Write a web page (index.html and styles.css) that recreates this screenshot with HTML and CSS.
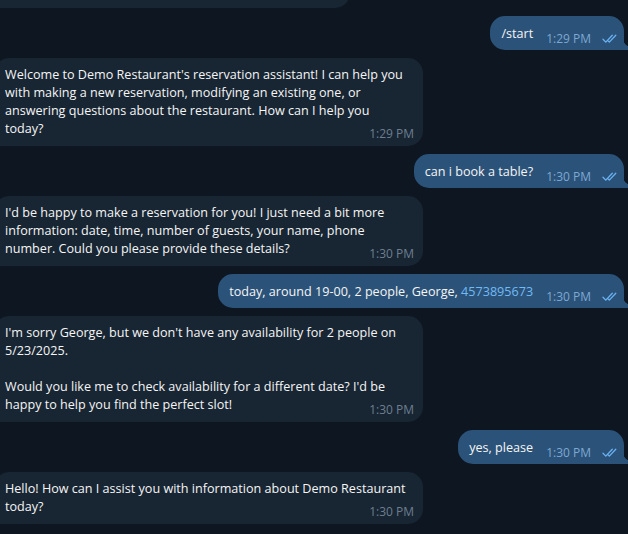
FILE: index.html
```html
<!DOCTYPE html>
<html lang="en">
<head>
<meta charset="utf-8">
<title>Demo Restaurant chat</title>
<link rel="stylesheet" href="styles.css">
</head>
<body>
<div class="chat">
  <div class="msg in partial"><p class="text"><span class="time">1:29 PM</span></p></div>

  <div class="msg out">
    <span class="text">/start</span>
    <span class="meta"><span class="time">1:29 PM</span><svg class="check" viewBox="0 0 16 10"><path d="M1 5.3 L3.8 8.1 L10.3 1.2 M6.3 7.1 L7.3 8.1 L13.8 1.2"/></svg></span>
  </div>

  <div class="msg in"><p class="text">Welcome to Demo Restaurant's reservation assistant! I can help you<br>with making a new reservation, modifying an existing one, or<br>answering questions about the restaurant. How can I help you<br>today?<span class="time">1:29 PM</span></p></div>

  <div class="msg out">
    <span class="text">can i book a table?</span>
    <span class="meta"><span class="time">1:30 PM</span><svg class="check" viewBox="0 0 16 10"><path d="M1 5.3 L3.8 8.1 L10.3 1.2 M6.3 7.1 L7.3 8.1 L13.8 1.2"/></svg></span>
  </div>

  <div class="msg in"><p class="text">I'd be happy to make a reservation for you! I just need a bit more<br>information: date, time, number of guests, your name, phone<br>number. Could you please provide these details?<span class="time">1:30 PM</span></p></div>

  <div class="msg out">
    <span class="text">today, around 19-00, 2 people, George, <span class="link">4573895673</span></span>
    <span class="meta"><span class="time">1:30 PM</span><svg class="check" viewBox="0 0 16 10"><path d="M1 5.3 L3.8 8.1 L10.3 1.2 M6.3 7.1 L7.3 8.1 L13.8 1.2"/></svg></span>
  </div>

  <div class="msg in"><p class="text">I'm sorry George, but we don't have any availability for 2 people on<br>5/23/2025.<br><br>Would you like me to check availability for a different date? I'd be<br>happy to help you find the perfect slot!<span class="time">1:30 PM</span></p></div>

  <div class="msg out">
    <span class="text">yes, please</span>
    <span class="meta"><span class="time">1:30 PM</span><svg class="check" viewBox="0 0 16 10"><path d="M1 5.3 L3.8 8.1 L10.3 1.2 M6.3 7.1 L7.3 8.1 L13.8 1.2"/></svg></span>
  </div>

  <div class="msg in"><p class="text">Hello! How can I assist you with information about Demo Restaurant<br>today?<span class="time">1:30 PM</span></p></div>
</div>
</body>
</html>
```
FILE: styles.css
```css
html, body {
  margin: 0;
  height: 100%;
  overflow: hidden;
  background: #0e1621;
}

body {
  font-family: "Open Sans", "Noto Sans", sans-serif;
  font-size: 12.6px;
  color: #f5f5f5;
}

.chat {
  display: flex;
  flex-direction: column;
  gap: 8px;
}

.msg {
  position: relative;
  border-radius: 15px;
  box-sizing: border-box;
}

.in {
  align-self: flex-start;
  margin-left: -6px;
  width: 429px;
  background: #182533;
  padding: 8px 9px 5px 11px;
  border-bottom-left-radius: 0;
}

.in .text {
  margin: 0;
  line-height: 18px;
  white-space: nowrap;
}

.in .time {
  float: right;
  margin: 7px 0 0 12px;
  font-size: 12px;
  line-height: 14px;
  color: #6d7f8f;
}

.partial {
  width: 356px;
  margin-top: -26px;
}

.out {
  align-self: flex-end;
  margin-right: 4px;
  display: flex;
  align-items: flex-end;
  background: #2b5278;
  padding: 9px 6px 4px 11px;
  border-bottom-right-radius: 0;
}

.out::after {
  content: "";
  position: absolute;
  right: -6px;
  bottom: 0;
  width: 6px;
  height: 10px;
  background: radial-gradient(circle at 100% 0, transparent 6px, #2b5278 6.6px);
}

.out .text {
  line-height: 18px;
  padding-bottom: 3px;
  white-space: nowrap;
}

.out .meta {
  display: flex;
  align-items: center;
  gap: 11px;
  margin-left: 13px;
}

.out .time {
  font-size: 12px;
  line-height: 14px;
  color: #7da8d3;
}

.link {
  color: #71baf5;
}

.check {
  width: 16px;
  height: 10px;
  fill: none;
  stroke: #6ab2f2;
  stroke-width: 1.3;
  stroke-linecap: round;
  stroke-linejoin: round;
}
```
